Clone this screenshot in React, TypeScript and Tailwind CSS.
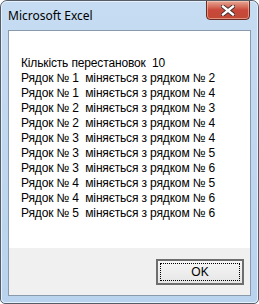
import React from "react";

const lines = [
  "Кількість перестановок  10",
  "Рядок № 1  міняється з рядком № 2",
  "Рядок № 1  міняється з рядком № 4",
  "Рядок № 2  міняється з рядком № 3",
  "Рядок № 2  міняється з рядком № 4",
  "Рядок № 3  міняється з рядком № 4",
  "Рядок № 3  міняється з рядком № 5",
  "Рядок № 3  міняється з рядком № 6",
  "Рядок № 4  міняється з рядком № 5",
  "Рядок № 4  міняється з рядком № 6",
  "Рядок № 5  міняється з рядком № 6",
];

export default function App() {
  return (
    <div
      className="relative w-[259px] h-[304px] overflow-hidden rounded-t-[7px] rounded-b-[5px] border border-[#555d68] bg-gradient-to-b from-[#c6dcf2] via-[#bfd7f0] to-[#b9d3ee] flex flex-col"
      style={{ fontFamily: '"Liberation Sans", Arial, sans-serif' }}
    >
      <div className="absolute inset-0 rounded-t-[6px] rounded-b-[4px] border border-[#e6f0fa] pointer-events-none" />
      <div
        className="h-[29px] flex items-center pl-[7px] text-[12px] text-black"
        style={{ fontFamily: '"Noto Sans", sans-serif' }}
      >
        Microsoft Excel
      </div>
      {/* close button */}
      <div className="absolute left-[205px] top-[-1px] w-[44px] h-[20px] rounded-b-[4px] border border-[#6b2a22] bg-gradient-to-b from-[#e5a796] via-[#c9483a] to-[#c24a35] flex items-center justify-center shadow-[inset_0_0_0_1px_rgba(255,220,200,0.5)]">
        <svg width="14" height="11" viewBox="0 0 14 11">
          <path
            d="M2 1.5 L12 9.5 M12 1.5 L2 9.5"
            stroke="#3b2b2b"
            strokeWidth="4.2"
            strokeLinecap="square"
          />
          <path
            d="M2 1.5 L12 9.5 M12 1.5 L2 9.5"
            stroke="#ffffff"
            strokeWidth="2.4"
            strokeLinecap="square"
          />
        </svg>
      </div>
      <div className="mx-[7px] mb-[7px] flex-1 flex flex-col border border-[#8a9aad]">
        <div className="bg-white h-[217px] pl-[12px] pt-[25px] text-[12px] leading-[15px] tracking-[-0.15px] text-black whitespace-pre">
          {lines.map((l, i) => (
            <div key={i}>{l}</div>
          ))}
        </div>
        <div className="flex-1 bg-[#f0f0f0] flex justify-end items-start pt-[11px] pr-[6px]">
          <div className="w-[88px] h-[26px] border-2 border-[#6e6e6e] bg-gradient-to-b from-[#f6f6f6] to-[#e6e6e6] p-[2px]">
            <div className="w-full h-full border border-dotted border-black flex items-center justify-center text-[12px] text-black">
              OK
            </div>
          </div>
        </div>
      </div>
    </div>
  );
}
